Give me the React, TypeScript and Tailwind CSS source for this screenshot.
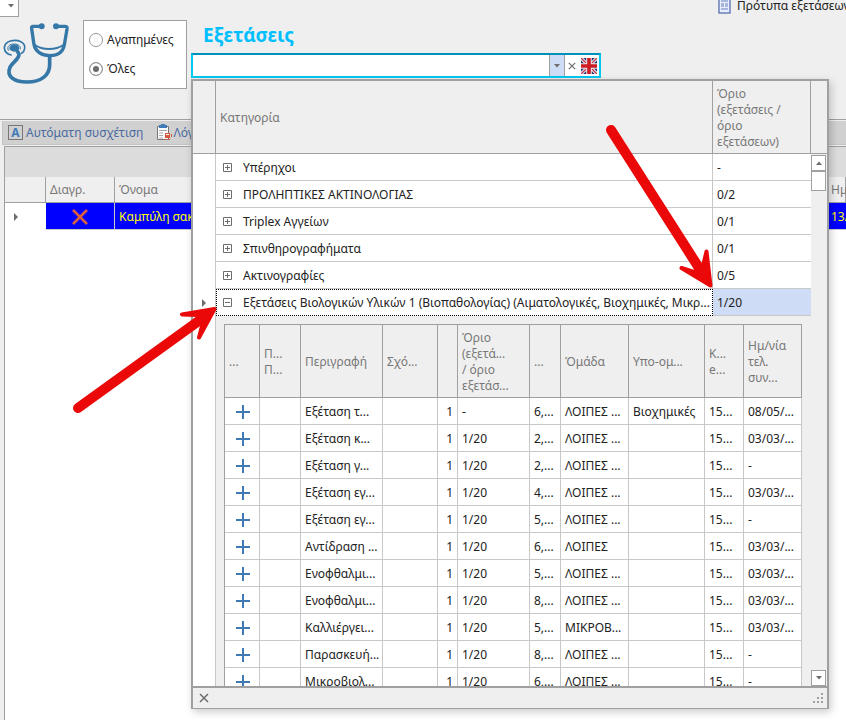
import { useState } from "react";
import clsx from "clsx";

interface Category {
  name: string;
  limit: string;
  expanded?: boolean;
}

interface Exam {
  name: string;
  limit: string;
  price: string;
  group: string;
  subgroup?: string;
  code: string;
  date: string;
}

const categories: Category[] = [
  { name: "Υπέρηχοι", limit: "-" },
  { name: "ΠΡΟΛΗΠΤΙΚΕΣ ΑΚΤΙΝΟΛΟΓΙΑΣ", limit: "0/2" },
  { name: "Triplex Αγγείων", limit: "0/1" },
  { name: "Σπινθηρογραφήματα", limit: "0/1" },
  { name: "Ακτινογραφίες", limit: "0/5" },
  {
    name: "Εξετάσεις Βιολογικών Υλικών 1 (Βιοπαθολογίας) (Αιματολογικές, Βιοχημικές, Μικρ...",
    limit: "1/20",
    expanded: true,
  },
];

const exams: Exam[] = [
  { name: "Εξέταση τ...", limit: "-", price: "6,...", group: "ΛΟΙΠΕΣ ...", subgroup: "Βιοχημικές", code: "15...", date: "08/05/..." },
  { name: "Εξέταση κ...", limit: "1/20", price: "2,...", group: "ΛΟΙΠΕΣ ...", code: "15...", date: "03/03/..." },
  { name: "Εξέταση γ...", limit: "1/20", price: "2,...", group: "ΛΟΙΠΕΣ ...", code: "15...", date: "-" },
  { name: "Εξέταση εγ...", limit: "1/20", price: "4,...", group: "ΛΟΙΠΕΣ ...", code: "15...", date: "03/03/..." },
  { name: "Εξέταση εγ...", limit: "1/20", price: "5,...", group: "ΛΟΙΠΕΣ ...", code: "15...", date: "-" },
  { name: "Αντίδραση ...", limit: "1/20", price: "6,...", group: "ΛΟΙΠΕΣ", code: "15...", date: "03/03/..." },
  { name: "Ενοφθαλμι...", limit: "1/20", price: "5,...", group: "ΛΟΙΠΕΣ ...", code: "15...", date: "03/03/..." },
  { name: "Ενοφθαλμι...", limit: "1/20", price: "8,...", group: "ΛΟΙΠΕΣ ...", code: "15...", date: "03/03/..." },
  { name: "Καλλιέργει...", limit: "1/20", price: "5,...", group: "ΜΙΚΡΟΒ...", code: "15...", date: "03/03/..." },
  { name: "Παρασκευή...", limit: "1/20", price: "8,...", group: "ΛΟΙΠΕΣ ...", code: "15...", date: "-" },
  { name: "Μικροβιολ...", limit: "1/20", price: "6,...", group: "ΛΟΙΠΕΣ ...", code: "15...", date: "-" },
];

const examColumns = [
  { lines: ["..."], width: "w-[35px]" },
  { lines: ["Π...", "Π..."], width: "w-[41px]" },
  { lines: ["Περιγραφή"], width: "w-[82px]" },
  { lines: ["Σχό..."], width: "w-[55px]" },
  { lines: [""], width: "w-[20px]" },
  { lines: ["Όριο", "(εξετά...", "/ όριο", "εξετάσ..."], width: "w-[72px]" },
  { lines: ["..."], width: "w-[31px]" },
  { lines: ["Όμάδα"], width: "w-[68px]" },
  { lines: ["Υπο-ομ..."], width: "w-[76px]" },
  { lines: ["Κ...", "e..."], width: "w-[39px]" },
  { lines: ["Ημ/νία", "τελ.", "συν..."], width: "w-[58px]" },
];

const Stethoscope = () => (
  <svg viewBox="0 24 228 192" className="h-16 w-[76px]" fill="none" stroke="#3578a8" strokeLinecap="round">
    <path d="M124 37H98q-4 0-3 7l7 48c4 20 22 33 47 33s40-12 44-32l8-48q1-8-4-8h-28" strokeWidth="10" />
    <path d="M105 93c22 16 62 16 85 0" strokeWidth="6" />
    <path d="M149 128v24c0 32-26 52-68 52c-42 0-62-18-51-44c7-16 28-24 27-40l-5-8" strokeWidth="11" />
    <circle cx="125" cy="37" r="9" fill="#3578a8" stroke="none" />
    <circle cx="168" cy="37" r="9" fill="#3578a8" stroke="none" />
    <ellipse cx="43" cy="102" rx="15" ry="11" fill="#3578a8" stroke="none" />
    <path d="M33 123c-26-7-26-34-2-42c24-6 46 4 43 22c-1 8-4 12-9 15" strokeWidth="5" />
    <path d="M25 109c-6-13 5-19 18-19c11 0 20 6 18 15" strokeWidth="3" />
  </svg>
);

const UkFlag = () => (
  <svg viewBox="0 0 16 16" className="size-4">
    <rect width="16" height="16" fill="#27306f" />
    <path d="M0 0l16 16M16 0L0 16" stroke="#d8d9e6" strokeWidth="3.4" />
    <path d="M0 0l16 16M16 0L0 16" stroke="#c8303a" strokeWidth="1.2" />
    <path d="M8 0v16M0 8h16" stroke="#f0e4e8" strokeWidth="5.6" />
    <path d="M8 0v16M0 8h16" stroke="#cc1c24" strokeWidth="3.6" />
  </svg>
);

const TemplateIcon = () => (
  <svg viewBox="0 0 13 14" className="h-[14px] w-[13px]">
    <rect x="1" y="-2" width="11" height="15" fill="#e8eefa" stroke="#6377b5" strokeWidth="1.4" />
    <path d="M3 1h7M3 4h3M7 4h3M3 6h3M7 6h3M3 9h7" stroke="#92a5d5" strokeWidth="1.5" />
  </svg>
);

const ClipboardIcon = () => (
  <svg viewBox="0 0 15 17" className="h-[17px] w-[15px]">
    <path d="M.5 2.500h11v13H.5z" fill="#fff" stroke="#777" />
    <path d="M2 1h2V0h4v1h2v3H2z" fill="#417cb8" />
    <path d="M2 6.500h8M2 9h4M2 11.500h4M2 14h4" stroke="#aaa" />
    <path d="M8 9h5v5H8z" fill="#d85a3a" />
    <path d="M7 15.500h2M11 15.500h2M14.500 10v3" stroke="#d85a3a" />
    <path d="M9 10.500h3" stroke="#fff" />
  </svg>
);

const Triangle = ({ d, className }: { d: string; className?: string }) => (
  <svg viewBox="0 0 8 8" className={clsx("size-2", className)} fill="#6d6d6d">
    <path d={d} />
  </svg>
);

const down = "M1 2h6L4 5.500z";
const up = "M1 6h6L4 2.500z";
const right = "M2 0v8l4-4z";

const Cross = ({ className }: { className?: string }) => (
  <svg viewBox="0 0 10 10" className={className} fill="none" stroke="currentColor" strokeWidth="1.5">
    <path d="M1 1l8 8M9 1L1 9" />
  </svg>
);

const Expander = ({ open }: { open?: boolean }) => (
  <button type="button" aria-label={open ? "Σύμπτυξη" : "Ανάπτυξη"} className="block size-[9px] shrink-0">
    <svg viewBox="0 0 9 9" className="size-[9px]" fill="none" stroke="#6d6d6d">
      <path d={open ? "M.5.5h8v8h-8zM2 4.500h5" : "M.5.5h8v8h-8zM2 4.500h5M4.500 2v5"} />
    </svg>
  </button>
);

const ExamTable = () => (
  <table className="w-[578px] table-fixed border-separate border-spacing-0 border-t border-l border-[#a0a0a0] text-left">
    <thead>
      <tr className="h-[73px]">
        {examColumns.map((col, i) => (
          <th
            key={i}
            className={clsx(
              "border-r border-b border-[#a0a0a0] bg-[#efefef] p-0 pt-px pl-1 font-normal whitespace-nowrap text-[#777]",
              col.width,
            )}
          >
            {col.lines.map((line, n) => (
              <span key={n} className="block leading-4">{line}</span>
            ))}
          </th>
        ))}
      </tr>
    </thead>
    <tbody className="[&_td]:border-r [&_td]:border-b [&_td]:border-[#c8c8c8] [&_td]:bg-white [&_td]:p-0 [&_td]:pt-px [&_td]:pl-1 [&_td]:whitespace-nowrap">
      {exams.map((exam, i) => (
        <tr key={i} className="h-[27px]">
          <td>
            <button type="button" aria-label="Προσθήκη" className="ml-[7px] block text-[#3f7ab5]">
              <svg viewBox="0 0 14 14" className="size-[14px]" stroke="currentColor" strokeWidth="2">
                <path d="M0 7h14M7 0v14" />
              </svg>
            </button>
          </td>
          <td />
          <td>{exam.name}</td>
          <td />
          <td className="text-right">
            <span className="pr-1">1</span>
          </td>
          <td>{exam.limit}</td>
          <td>{exam.price}</td>
          <td>{exam.group}</td>
          <td>{exam.subgroup}</td>
          <td>{exam.code}</td>
          <td>{exam.date}</td>
        </tr>
      ))}
    </tbody>
  </table>
);

const CategoryPopup = () => (
  <div className="absolute top-[26px] right-[17px] left-0 z-10 border-2 border-b border-[#a0a0a0] bg-[#efefef] shadow-[2px_3px_8px_rgba(0,0,0,0.2)]">
    <div className="flex h-[607px] overflow-hidden border-b-2 border-[#a0a0a0]">
      <div className="min-w-0 flex-1">
        <table className="w-full table-fixed border-separate border-spacing-0 text-left">
          <thead>
            <tr className="h-[73px] text-[#777] [&_th]:border-r [&_th]:border-b [&_th]:border-[#a0a0a0] [&_th]:p-0 [&_th]:pt-px [&_th]:pl-1 [&_th]:font-normal">
              <th className="w-[23px]" />
              <th>Κατηγορία</th>
              <th className="w-[98px] leading-4">
                Όριο
                <br />
                (εξετάσεις /
                <br />
                όριο
                <br />
                εξετάσεων)
              </th>
            </tr>
          </thead>
          <tbody>
            {categories.map((cat) => (
              <tr key={cat.name} className="h-[27px]">
                <td className="border-r border-[#c8c8c8] bg-white p-0 pl-[7px]">
                  {cat.expanded && <Triangle d={right} />}
                </td>
                <td
                  className={clsx(
                    "border-r border-b bg-white p-0",
                    cat.expanded ? "border border-dotted border-black pl-[6px]" : "border-[#c8c8c8] pt-px pl-[7px]",
                  )}
                >
                  <div className="flex items-center gap-[11px] whitespace-nowrap">
                    <Expander open={cat.expanded} />
                    {cat.name}
                  </div>
                </td>
                <td
                  className={clsx(
                    "border-b border-[#c8c8c8] p-0 pt-px pl-1",
                    cat.expanded ? "bg-[#cfdcf5]" : "bg-white",
                  )}
                >
                  {cat.limit}
                </td>
              </tr>
            ))}
            <tr>
              <td className="border-r border-[#c8c8c8] bg-white p-0" />
              <td colSpan={2} className="p-0 pt-2 pl-2">
                <ExamTable />
              </td>
            </tr>
          </tbody>
        </table>
      </div>
      <div className="flex w-4 flex-col">
        <div className="h-[73px] border-b border-[#a0a0a0]" />
        <button type="button" aria-label="Πάνω" className="mt-px flex h-4 w-[15px] items-center justify-center border border-[#a0a0a0] bg-white">
          <Triangle d={up} />
        </button>
        <div className="h-5 w-[15px] border border-[#a0a0a0] bg-white" />
        <button type="button" aria-label="Κάτω" className="mt-auto flex h-4 w-[15px] items-center justify-center border border-[#a0a0a0] bg-white">
          <Triangle d={down} />
        </button>
      </div>
    </div>
    <div className="flex h-5 items-center justify-between pr-1 pl-[6px]">
      <button type="button" aria-label="Κλείσιμο" className="text-[#6d6d6d]">
        <Cross className="size-[10px]" />
      </button>
      <svg viewBox="0 0 10 10" className="size-[10px]" fill="#a0a0a0">
        <path d="M8 0h2v2H8zM4 4h2v2H4zM8 4h2v2H8zM0 8h2v2H0zM4 8h2v2H4zM8 8h2v2H8z" />
      </svg>
    </div>
  </div>
);

const ExamSearch = () => {
  const [query, setQuery] = useState("");

  return (
    <div className="relative">
      <div className="flex h-[25px] w-[410px] border-2 border-[#00c8f0] border-t-[#0090b8] bg-white">
        <input
          id="exam-search"
          type="text"
          value={query}
          onChange={(e) => setQuery(e.target.value)}
          className="min-w-0 flex-1 px-1 outline-none"
        />
        <button type="button" aria-label="Άνοιγμα λίστας" className="flex w-4 items-center justify-center border-x border-[#a0a0a0] bg-[#cfdcf5]">
          <Triangle d={down} />
        </button>
        <button type="button" aria-label="Καθαρισμός" onClick={() => setQuery("")} className="flex w-[14px] items-center justify-center text-[#6d6d6d]">
          <Cross className="size-2" />
        </button>
        <button type="button" aria-label="English" className="flex w-5 items-center justify-center">
          <UkFlag />
        </button>
      </div>
      <CategoryPopup />
    </div>
  );
};

const FilterOption = ({ id, label, checked, onChange }: { id: string; label: string; checked: boolean; onChange: () => void }) => (
  <label htmlFor={id} className="flex h-[29px] items-center gap-1">
    <input
      id={id}
      type="radio"
      name="filter"
      checked={checked}
      onChange={onChange}
      className="size-[14px] appearance-none rounded-full border border-[#959595] bg-white checked:bg-[#6d6d6d] checked:shadow-[inset_0_0_0_3px_white]"
    />
    {label}
  </label>
);

const Annotations = () => (
  <svg
    viewBox="0 0 846 720"
    className="pointer-events-none absolute top-0 left-0 z-20 h-[720px] w-[846px]"
    fill="#ea0808"
    stroke="#ea0808"
    strokeLinecap="round"
    strokeLinejoin="round"
  >
    <path d="M78 408L200 320M611 130L701 271" strokeWidth="10" />
    <path d="M214.500 309L182 314.500L198 315L203 322L199 337.500ZM710.500 285.500L706.500 251.500L703 266L694 272L681.500 268Z" strokeWidth="4" />
  </svg>
);

const App = () => {
  const [filter, setFilter] = useState("all");

  return (
    <div className="relative flex min-h-screen flex-col overflow-hidden bg-[#efefef] font-['Noto_Sans','Open_Sans',sans-serif] text-xs text-[#222]">
      <header className="h-[120px] border-b border-[#a0a0a0]">
        <div className="flex h-[17px] items-start justify-between">
          <button type="button" aria-label="Επιλογές" className="flex h-[17px] w-[19px] items-center justify-center border-r border-b border-[#a0a0a0] bg-white pb-1 pl-1">
            <Triangle d={down} />
          </button>
          <button type="button" className="flex w-[128px] items-start gap-[6px] whitespace-nowrap">
            <span className="shrink-0"><TemplateIcon /></span>
            <span className="leading-3">Πρότυπα εξετάσεων</span>
          </button>
        </div>

        <div className="mt-[3px] flex items-start">
          <div className="mt-[2px] mr-[7px] shrink-0">
            <Stethoscope />
          </div>
          <fieldset className="mr-1 h-[69px] w-[104px] shrink-0 border border-[#a0a0a0] bg-white py-1 pl-[5px]">
            <FilterOption id="filter-favorites" label="Αγαπημένες" checked={filter === "favorites"} onChange={() => setFilter("favorites")} />
            <FilterOption id="filter-all" label="Όλες" checked={filter === "all"} onChange={() => setFilter("all")} />
          </fieldset>
          <div className="min-w-0 flex-1">
            <label htmlFor="exam-search" className="block h-[33px] pl-3 text-[19px] leading-[30px] font-bold text-[#00bfff]">
              Εξετάσεις
            </label>
            <ExamSearch />
          </div>
        </div>
      </header>

      <main className="mt-px ml-[2px] flex flex-1 flex-col">
        <div className="flex h-6 items-center border-b border-l border-[#c4c4c4] bg-[#d0d0d0] pl-[5px] text-[#4a6a9f]">
          <button type="button" className="flex items-center gap-[3px] whitespace-nowrap">
            <span className="flex h-[15px] w-[15px] items-center justify-center border border-[#777] font-bold text-[#417cb8]">A</span>
            Αυτόματη συσχέτιση
          </button>
          <button type="button" className="ml-[14px] flex items-center gap-px whitespace-nowrap">
            <ClipboardIcon />
            Λόγοι
          </button>
        </div>

        <div className="mt-px ml-[2px] flex-1 border-t border-l border-[#a0a0a0] bg-white">
          <div className="h-[30px] bg-[#dcdcdc]" />
          <table className="w-full table-fixed border-separate border-spacing-0 text-left">
            <thead>
              <tr className="h-[26px] bg-[#efefef] text-[#777] [&_th]:border-r [&_th]:border-b [&_th]:border-[#a0a0a0] [&_th]:p-0 [&_th]:pl-1 [&_th]:font-normal [&_th]:whitespace-nowrap">
                <th className="w-[41px]" />
                <th className="w-[69px]">Διαγρ.</th>
                <th>Όνομα</th>
                <th className="w-[19px]">Ημ/νία</th>
              </tr>
            </thead>
            <tbody>
              <tr className="h-[27px] text-[#ff0] [&_td]:p-0 [&_td]:pt-px [&_td]:whitespace-nowrap">
                <td>
                  <Triangle d={right} className="ml-[7px]" />
                </td>
                <td className="border-r border-b border-[#c8c8c8] bg-[#0000ff]">
                  <button type="button" aria-label="Διαγραφή" className="mx-auto block text-[#d8603f]">
                    <svg viewBox="0 0 16 16" className="size-4" stroke="currentColor" strokeWidth="2.6">
                      <path d="M1 1l14 14M15 1L1 15" />
                    </svg>
                  </button>
                </td>
                <td className="border-r border-b border-[#c8c8c8] bg-[#0000ff]">
                  <span className="pl-1">Καμπύλη σακχάρου</span>
                </td>
                <td className="border-b border-[#c8c8c8] bg-[#0000ff]">
                  <span className="pl-1">13/05</span>
                </td>
              </tr>
            </tbody>
          </table>
        </div>
      </main>

      <Annotations />
    </div>
  );
};

export default App;
